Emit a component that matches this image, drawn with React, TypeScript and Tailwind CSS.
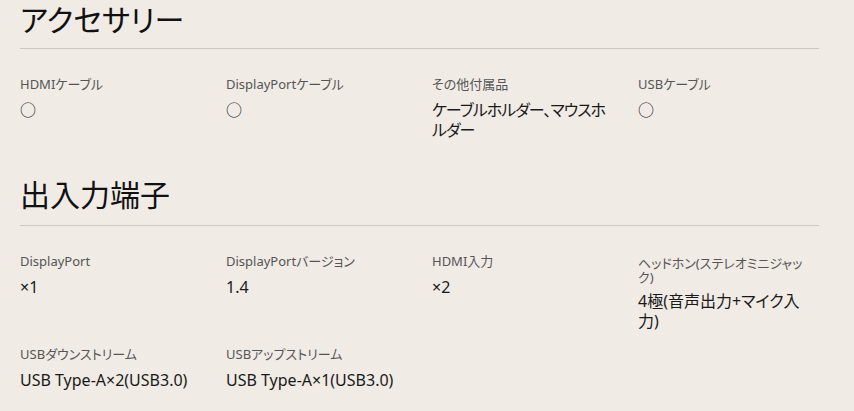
import React from "react";

type Spec = { label: string; value: string; long?: boolean; tight?: boolean };

const accessories: Spec[] = [
  { label: "HDMIケーブル", value: "○" },
  { label: "DisplayPortケーブル", value: "○" },
  { label: "その他付属品", value: "ケーブルホルダー、マウスホルダー", tight: true },
  { label: "USBケーブル", value: "○" },
];

const ports: Spec[] = [
  { label: "DisplayPort", value: "×1" },
  { label: "DisplayPortバージョン", value: "1.4" },
  { label: "HDMI入力", value: "×2" },
  { label: "ヘッドホン(ステレオミニジャック)", value: "4極(音声出力+マイク入力)", long: true },
  { label: "USBダウンストリーム", value: "USB Type-A×2(USB3.0)" },
  { label: "USBアップストリーム", value: "USB Type-A×1(USB3.0)" },
];

function SpecItem({ spec }: { spec: Spec }) {
  return (
    <div className="min-w-0">
      {spec.long ? (
        <p className="text-[13px] leading-[14px] pt-[4px] text-[#555]">{spec.label}</p>
      ) : (
        <p className="text-[13px] leading-[18px] text-[#555]">{spec.label}</p>
      )}
      <p
        className={
          spec.tight
            ? "mt-[7px] text-[16px] leading-[20px] tracking-[-1px] text-[#1a1a1a]"
            : "mt-[7px] text-[16px] leading-[20px] text-[#1a1a1a]"
        }
      >
        {spec.value}
      </p>
    </div>
  );
}

function Section({
  title,
  items,
  className,
  titleClass,
}: {
  title: string;
  items: Spec[];
  className?: string;
  titleClass: string;
}) {
  return (
    <section className={className}>
      <h2 className={titleClass}>{title}</h2>
      <div className="grid grid-cols-[repeat(4,178px)] gap-x-[28px] gap-y-[14px] pt-[26px]">
        {items.map((s) => (
          <SpecItem key={s.label} spec={s} />
        ))}
      </div>
    </section>
  );
}

export default function App() {
  return (
    <div
      className="w-[854px] h-[411px] overflow-hidden bg-[#f0ebe5] pl-5 pr-[35px] [font-feature-settings:'palt']"
      style={{ fontFamily: '"Noto Sans", "Noto Sans CJK JP", sans-serif' }}
    >
      <Section
        title="アクセサリー"
        items={accessories}
        titleClass="text-[30px] leading-[40px] pb-[8px] border-b border-[#cdc8c2] text-[#111] font-normal"
      />
      <Section
        title="出入力端子"
        items={ports}
        className="mt-[35px]"
        titleClass="text-[30px] leading-[40px] pb-[10px] border-b border-[#cdc8c2] text-[#111] font-normal"
      />
    </div>
  );
}
